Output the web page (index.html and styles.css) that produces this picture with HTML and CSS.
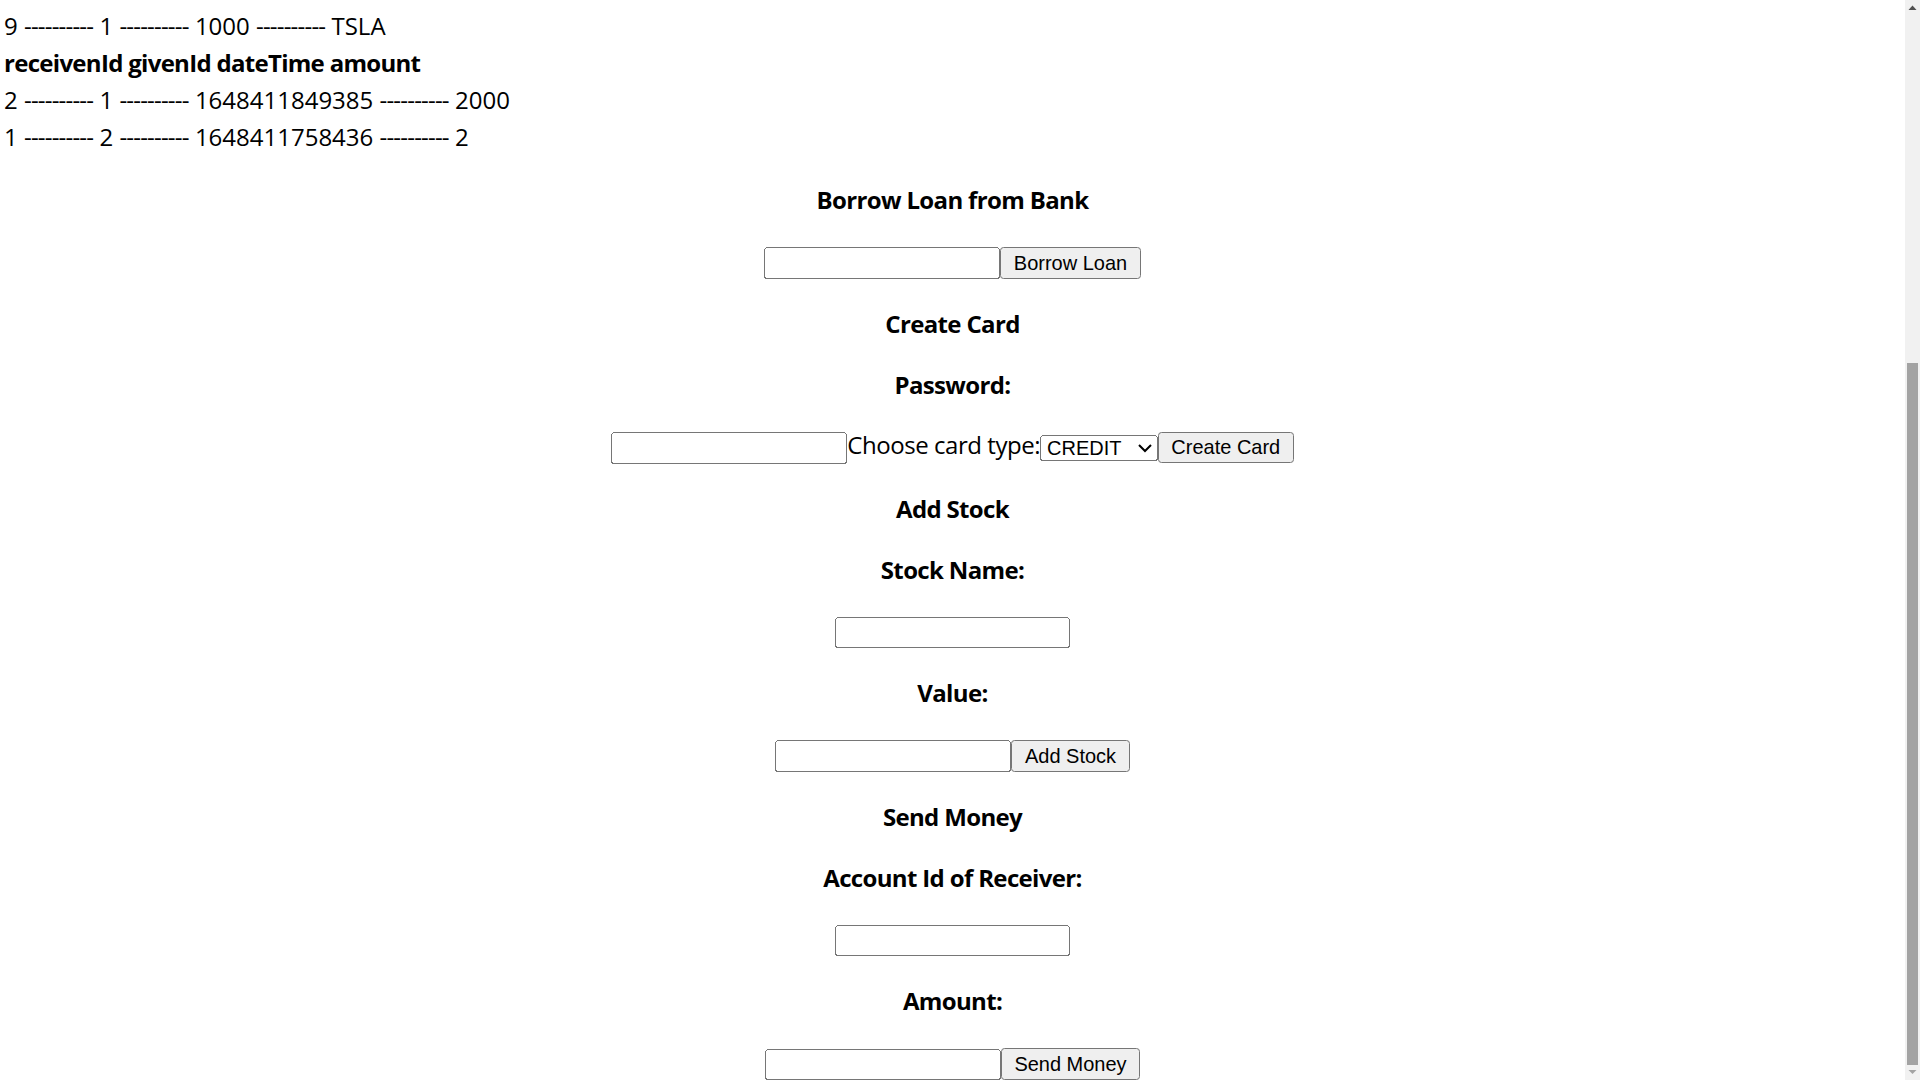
FILE: index.html
```html
<!DOCTYPE html>
<html lang="en">
<head>
<meta charset="utf-8">
<title>Bank</title>
<link rel="stylesheet" href="styles.css">
</head>
<body>
<div class="app">
  <main class="page">
    <div class="content">
      <section class="data">
        <h3 class="heading">Account</h3>
        <div class="row">Welcome, ali</div>
        <div class="row row-head">id name balance</div>
        <div class="row">1 <span class="dash">----------</span> ali <span class="dash">----------</span> 5998</div>
        <div class="row row-head">id accountId amount stockName</div>
        <div class="row">1 <span class="dash">----------</span> 1 <span class="dash">----------</span> 200 <span class="dash">----------</span> AAPL</div>
        <div class="row">2 <span class="dash">----------</span> 1 <span class="dash">----------</span> 150 <span class="dash">----------</span> GOOG</div>
        <div class="row">3 <span class="dash">----------</span> 1 <span class="dash">----------</span> 300 <span class="dash">----------</span> MSFT</div>
        <div class="row">4 <span class="dash">----------</span> 1 <span class="dash">----------</span> 120 <span class="dash">----------</span> AMZN</div>
        <div class="row">5 <span class="dash">----------</span> 1 <span class="dash">----------</span> 500 <span class="dash">----------</span> TSLA</div>
        <div class="row">6 <span class="dash">----------</span> 1 <span class="dash">----------</span> 80 <span class="dash">----------</span> NFLX</div>
        <div class="row">7 <span class="dash">----------</span> 1 <span class="dash">----------</span> 90 <span class="dash">----------</span> META</div>
        <div class="row">8 <span class="dash">----------</span> 1 <span class="dash">----------</span> 400 <span class="dash">----------</span> NVDA</div>
        <div class="row">9 <span class="dash">----------</span> 1 <span class="dash">----------</span> 1000 <span class="dash">----------</span> TSLA</div>
        <div class="row row-head">receivenId givenId dateTime amount</div>
        <div class="row">2 <span class="dash">----------</span> 1 <span class="dash">----------</span> 1648411849385 <span class="dash">----------</span> 2000</div>
        <div class="row">1 <span class="dash">----------</span> 2 <span class="dash">----------</span> 1648411758436 <span class="dash">----------</span> 2</div>
      </section>

      <section class="block">
        <h3 class="heading">Borrow Loan from Bank</h3>
        <div class="controls">
          <input class="field" type="text"><button class="btn" type="button">Borrow Loan</button>
        </div>
      </section>

      <section class="block">
        <h3 class="heading">Create Card</h3>
        <h3 class="heading">Password:</h3>
        <div class="controls">
          <input class="field" type="password"><label class="label">Choose card type:</label><select class="select"><option>CREDIT</option><option>DEBIT</option></select><button class="btn" type="button">Create Card</button>
        </div>
      </section>

      <section class="block">
        <h3 class="heading">Add Stock</h3>
        <h3 class="heading">Stock Name:</h3>
        <div class="controls">
          <input class="field" type="text">
        </div>
        <h3 class="heading">Value:</h3>
        <div class="controls">
          <input class="field" type="text"><button class="btn" type="button">Add Stock</button>
        </div>
      </section>

      <section class="block">
        <h3 class="heading">Send Money</h3>
        <h3 class="heading">Account Id of Receiver:</h3>
        <div class="controls">
          <input class="field" type="text">
        </div>
        <h3 class="heading">Amount:</h3>
        <div class="controls">
          <input class="field" type="text"><button class="btn" type="button">Send Money</button>
        </div>
      </section>
    </div>
  </main>

  <div class="scrollbar" aria-hidden="true">
    <div class="sb-btn">
      <svg width="15" height="15" viewBox="0 0 15 15"><polygon points="3.5,10 11.5,10 7.5,5.5" fill="#505050"/></svg>
    </div>
    <div class="sb-track">
      <div class="sb-thumb"></div>
    </div>
    <div class="sb-btn">
      <svg width="15" height="15" viewBox="0 0 15 15"><polygon points="3.5,5 11.5,5 7.5,9" fill="#a3a3a3"/></svg>
    </div>
  </div>
</div>
</body>
</html>
```

FILE: styles.css
```css
html {
  background: #ffffff;
}

body {
  margin: 0;
  color: #000000;
  font-family: "Open Sans", "Noto Sans", sans-serif;
  font-size: 24px;
}

.app {
  display: flex;
  height: 1080px;
  overflow: hidden;
}

/* the page is shown scrolled to its end: content is pinned to the bottom */
.page {
  flex: 1;
  min-width: 0;
  display: flex;
  flex-direction: column;
  justify-content: flex-end;
  overflow: hidden;
  padding: 0 4px;
}

.content {
  flex: none;
}

.row {
  line-height: 37px;
  white-space: nowrap;
}

.row-head {
  font-weight: 700;
  letter-spacing: -0.7px;
}

.dash {
  letter-spacing: -0.8px;
}

.heading {
  margin: 31px 0 33px;
  font-size: 24px;
  line-height: 28px;
  font-weight: 700;
  letter-spacing: -0.65px;
  text-align: center;
}

.controls {
  display: flex;
  justify-content: center;
  align-items: baseline;
}

.label {
  font-size: 24px;
  line-height: 26px;
  letter-spacing: -0.45px;
  white-space: nowrap;
}

.field,
.btn,
.select {
  zoom: 1.5;
  margin: 0;
  font-family: "Liberation Sans", Arial, sans-serif;
  font-size: 13.333px;
  color: #000000;
}

.field {
  box-sizing: border-box;
  width: 157.33px;
  height: 21px;
  padding: 1px 2px;
}

.btn {
  box-sizing: border-box;
  height: 21px;
  padding: 1px 7px;
}

.select {
  box-sizing: border-box;
  width: 78.5px;
  height: 17.5px;
  align-self: center;
}

/* page scrollbar (scrolled to the end) */
.scrollbar {
  flex: 0 0 15px;
  display: flex;
  flex-direction: column;
  background: #f1f1f1;
}

.sb-btn {
  flex: 0 0 15px;
  display: flex;
}

.sb-track {
  flex: 1;
  display: flex;
  flex-direction: column;
  padding: 348px 2px 0;
}

.sb-thumb {
  flex: 1;
  background: #a3a3a3;
}
```
